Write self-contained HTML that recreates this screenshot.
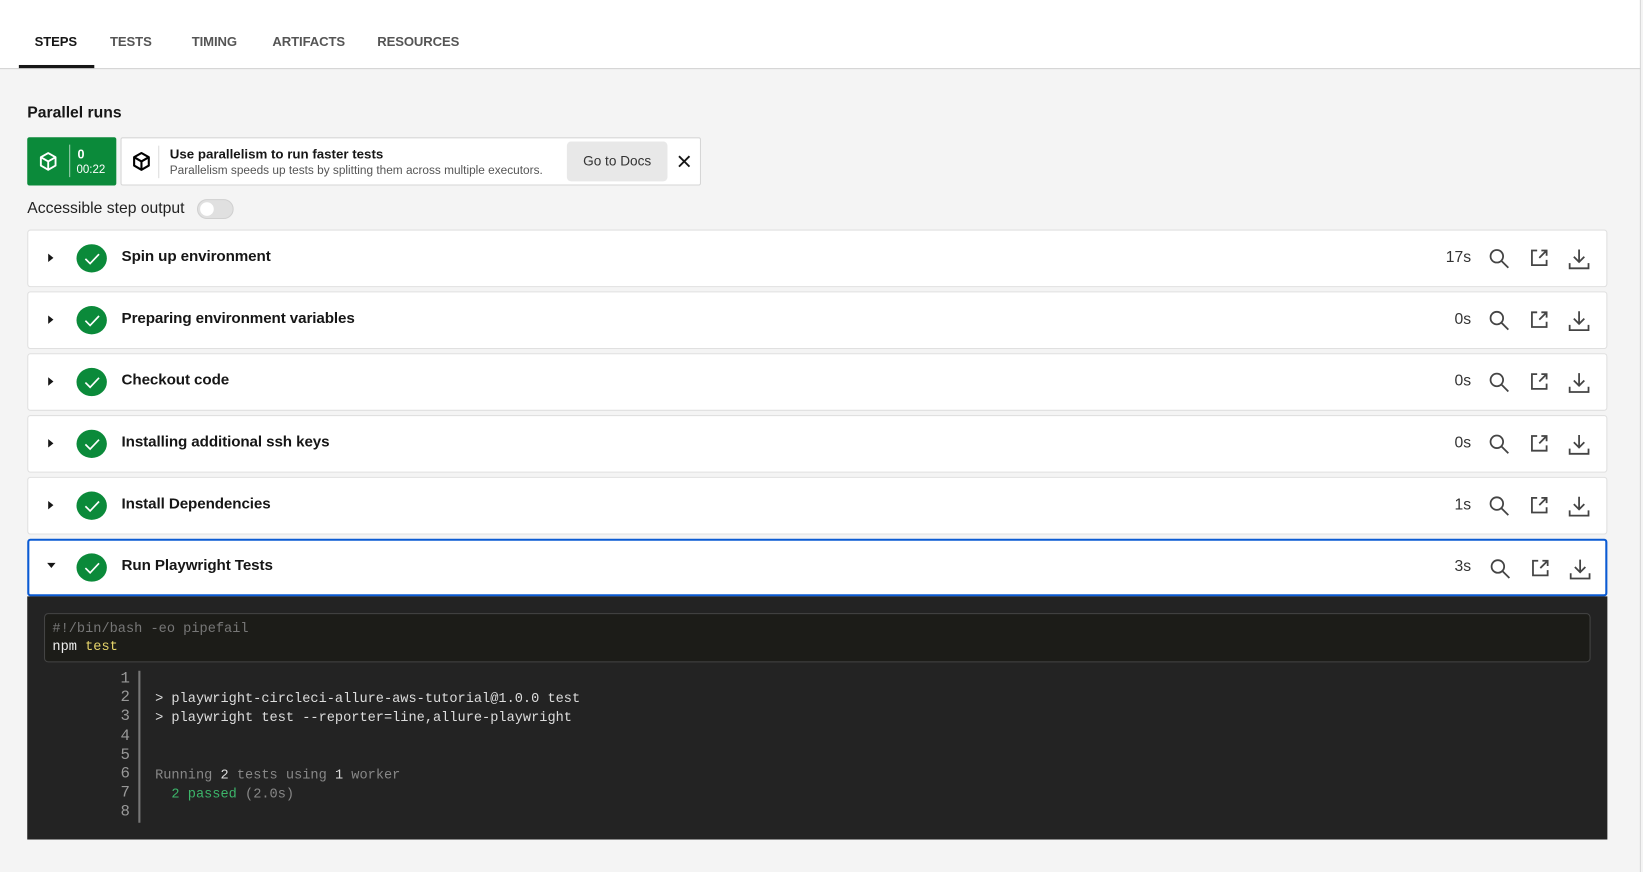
<!DOCTYPE html>
<html><head><meta charset="utf-8"><style>
*{box-sizing:border-box;margin:0;padding:0}
html,body{width:1643px;height:872px;overflow:hidden;background:#f4f4f4;font-family:"Liberation Sans",sans-serif;color:#161616}
#w{position:absolute;left:0;top:0;width:1568px;height:832px;transform:scale(1.04783,1.04808);transform-origin:0 0;background:#f4f4f4}
.hdr{position:absolute;left:0;top:0;width:1566px;height:66px;background:#fff;border-bottom:1px solid #d0d0d0}
.tab{position:absolute;top:33px;font-size:12.5px;font-weight:bold;color:#555;letter-spacing:-.1px}
.ul{position:absolute;left:18px;top:62px;width:72px;height:3px;background:#161616}
.vb{position:absolute;left:1565px;top:0;width:1px;height:832px;background:#d6d6d6}
.abs{position:absolute}
.card{position:absolute;left:26px;width:1508px;height:55px;background:#fff;border:1px solid #e0e0e0;border-radius:3px}
.card .car{position:absolute;left:19px;top:22px;width:0;height:0;border-top:4px solid transparent;border-bottom:4px solid transparent;border-left:5px solid #161616}
.card .chk{position:absolute;left:46px;top:13px;width:29px;height:27px;border-radius:50%;background:#0b8a3a}
.card .t{position:absolute;left:89px;top:17px;font-size:14.5px;font-weight:bold;letter-spacing:-.1px}
.card .tm{position:absolute;right:129px;top:17px;font-size:15px;color:#333}
.card svg.ic{position:absolute;top:16px}
.mono{font-family:"Liberation Mono",monospace;font-size:13px}
</style></head><body><div id="w">
<div class="hdr">
<div class="tab" style="left:33px;color:#161616">STEPS</div>
<div class="tab" style="left:105px">TESTS</div>
<div class="tab" style="left:183px">TIMING</div>
<div class="tab" style="left:260px">ARTIFACTS</div>
<div class="tab" style="left:360px">RESOURCES</div>
<div class="ul"></div>
</div>
<div class="vb"></div>
<div class="abs" style="left:26px;top:99px;font-size:15px;font-weight:bold">Parallel runs</div>
<div class="abs" style="left:26px;top:131px;width:85px;height:46px;background:#0b8a3a;border-radius:2px">
<svg class="abs" style="left:10px;top:13px" width="20" height="20" viewBox="0 0 20 20" fill="none" stroke="#fff" stroke-width="1.8" stroke-linejoin="round"><path d="M10 2 17 6v8l-7 4-7-4V6z M3 6l7 4 7-4 M10 10v8"/></svg>
<div class="abs" style="left:40px;top:7px;width:1px;height:31px;background:#fff;opacity:.6"></div>
<div class="abs" style="left:48px;top:9px;color:#fff;font-size:12px;font-weight:bold">0</div>
<div class="abs" style="left:47px;top:25px;color:#fff;font-size:11px">00:22</div>
</div>
<div class="abs" style="left:115px;top:131px;width:554px;height:46px;background:#fff;border:1px solid #d6d6d6;border-radius:2px">
<svg class="abs" style="left:9px;top:12px" width="20" height="20" viewBox="0 0 20 20" fill="none" stroke="#000" stroke-width="2" stroke-linejoin="round"><path d="M10 2 17 6v8l-7 4-7-4V6z M3 6l7 4 7-4 M10 10v8"/></svg>
<div class="abs" style="left:35px;top:7px;width:1px;height:31px;background:#ddd"></div>
<div class="abs" style="left:46px;top:8px;font-size:12.7px;font-weight:bold;color:#161616">Use parallelism to run faster tests</div>
<div class="abs" style="left:46px;top:25px;font-size:11.3px;color:#555">Parallelism speeds up tests by splitting them across multiple executors.</div>
<div class="abs" style="left:425px;top:3px;width:96px;height:38px;background:#e8e8e8;border-radius:4px;font-size:13px;color:#333;text-align:center;line-height:38px">Go to Docs</div>
<svg class="abs" style="left:530px;top:15px" width="14" height="14" viewBox="0 0 14 14" stroke="#161616" stroke-width="1.8"><path d="M2 2l10 10M12 2 2 12"/></svg>
</div>
<div class="abs" style="left:26px;top:190px;font-size:15px;color:#222">Accessible step output</div>
<div class="abs" style="left:188px;top:190px;width:35px;height:19px;border-radius:10px;background:#e0e0e0;border:1px solid #d0d0d0"><div style="position:absolute;left:2px;top:2px;width:13px;height:13px;border-radius:50%;background:#fff"></div></div>

<div id="cards"></div>
<div class="abs" style="left:26px;top:569px;width:1508px;height:232px;background:#232323">
<div class="abs" style="left:16px;top:16px;width:1476px;height:47px;background:#1c1c18;border:1px solid #444;border-radius:4px">
<div class="abs mono" style="left:7px;top:6px;color:#777">#!/bin/bash -eo pipefail</div>
<div class="abs mono" style="left:7px;top:23px;color:#eee">npm <span style="color:#e6d46a">test</span></div>
</div>
<div class="abs" style="left:106px;top:71px;width:2px;height:145px;background:#777"></div>
<div class="abs mono" style="left:60px;top:70px;width:38px;text-align:right;color:#999;font-size:15px;line-height:18.2px">1<br>2<br>3<br>4<br>5<br>6<br>7<br>8</div>
<div class="abs mono" style="left:122px;top:89px;color:#ddd;line-height:18.2px;white-space:pre">&gt; playwright-circleci-allure-aws-tutorial@1.0.0 test
&gt; playwright test --reporter=line,allure-playwright


<span style="color:#888">Running </span>2<span style="color:#888"> tests using </span>1<span style="color:#888"> worker</span>
  <span style="color:#3cb56a">2 passed</span><span style="color:#888"> (2.0s)</span></div>
</div>
</div>
<script>
var rows=[["Spin up environment","17s",219],["Preparing environment variables","0s",278],["Checkout code","0s",337],["Installing additional ssh keys","0s",396],["Install Dependencies","1s",455],["Run Playwright Tests","3s",514]];
var h="";
rows.forEach(function(r,i){
var last=i==5;
h+='<div class="card" style="top:'+r[2]+'px;'+(last?'border:2px solid #0b5bd3;':'')+'">'+
(last?'<div class="car" style="left:17px;top:21px;border-left:4px solid transparent;border-right:4px solid transparent;border-top:5px solid #161616;border-bottom:0"></div>':'<div class="car"></div>')+
'<div class="chk"'+(last?' style="left:45px;top:12px"':'')+'><svg width="29" height="27" viewBox="0 0 29 27" fill="none" stroke="#fff" stroke-width="1.6"><path d="M8.5 14l4.5 4.5 8.5-9"/></svg></div>'+
'<div class="t"'+(last?' style="left:88px;top:16px"':'')+'>'+r[0]+'</div><div class="tm"'+(last?' style="top:16px;right:128px"':'')+'>'+r[1]+'</div>'+
'<svg class="ic" style="left:1393px" width="22" height="22" viewBox="0 0 22 22" fill="none" stroke="#444" stroke-width="1.7"><circle cx="8.5" cy="8.5" r="6"/><path d="M13 13l6.5 6.5"/></svg>'+
'<svg class="ic" style="left:1432px" width="20" height="20" viewBox="0 0 20 20" fill="none" stroke="#444" stroke-width="1.7"><path d="M8 3H3v14h14v-5M12 3h5v5M17 3l-7 7"/></svg>'+
'<svg class="ic" style="left:1469px" width="22" height="22" viewBox="0 0 22 22" fill="none" stroke="#444" stroke-width="1.7"><path d="M11 2v12M6 9l5 5 5-5M2 15v5h18v-5"/></svg>'+
'</div>';});
document.getElementById("cards").innerHTML=h;
</script>
</div></body></html>
